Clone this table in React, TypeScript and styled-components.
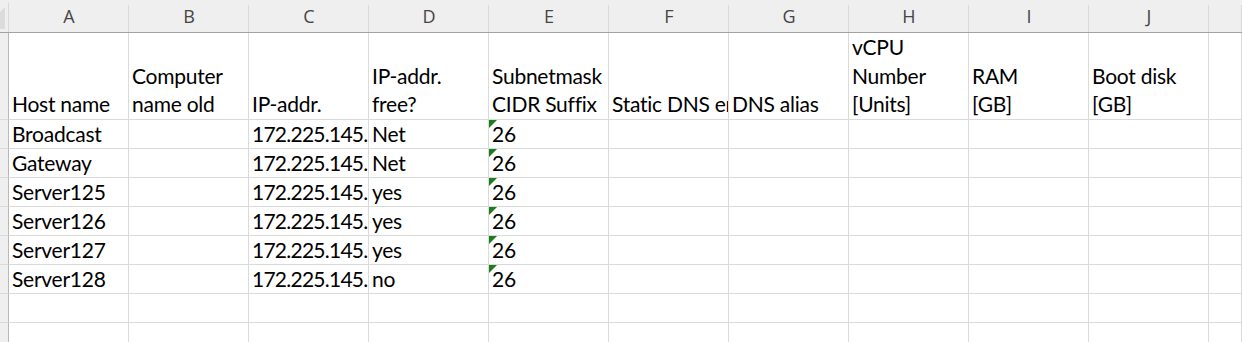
import React from "react";
import styled, { createGlobalStyle } from "styled-components";

const GlobalStyle = createGlobalStyle`
  html, body {
    margin: 0;
    padding: 0;
    overflow: hidden;
    background: #ffffff;
  }
  * { box-sizing: border-box; }
`;

const GRID = "#dadada";
const HEADER_BG = "#efefef";

const Sheet = styled.div`
  display: grid;
  grid-template-columns: 9px repeat(10, 120px) 1fr;
  grid-template-rows: 33px 87px repeat(8, 29px);
  width: 100vw;
  height: 100vh;
  overflow: hidden;
  background: #ffffff;
`;

const Corner = styled.div`
  background: ${HEADER_BG};
  border-bottom: 1px solid #a2a2a2;
  background-image: linear-gradient(to bottom, transparent 3px, #d9d9d9 3px);
  background-size: 1px 100%;
  background-position: right top;
  background-repeat: no-repeat;
  display: flex;
  align-items: flex-start;
`;

const ColHead = styled.div`
  background-color: ${HEADER_BG};
  background-image: linear-gradient(to bottom, transparent 5px, #d9d9d9 5px);
  background-size: 1px 100%;
  background-position: right top;
  background-repeat: no-repeat;
  border-bottom: 1px solid #a2a2a2;
  display: flex;
  align-items: center;
  justify-content: center;
  padding-bottom: 1px;
  font-family: "Open Sans", "Noto Sans", sans-serif;
  font-size: 18px;
  color: #454545;
`;

const RowHead = styled.div`
  background: ${HEADER_BG};
  border-right: 1px solid #b8b8b8;
  border-bottom: 1px solid ${GRID};
`;

const Cell = styled.div<{ $head?: boolean; $tight?: boolean }>`
  position: relative;
  border-right: 1px solid ${GRID};
  border-bottom: 1px solid ${GRID};
  padding: 0 0 0 3px;
  display: flex;
  flex-direction: column;
  justify-content: flex-end;
  overflow: hidden;
  white-space: nowrap;
  font-family: "Lato", "Open Sans", sans-serif;
  font-size: 21px;
  letter-spacing: ${(p) => (p.$tight ? "-0.75px" : "-0.25px")};
  line-height: ${(p) => (p.$head ? "28.6px" : "28px")};
  color: #000000;
`;

const Line = styled.span`
  display: block;
`;

const ErrorMark = styled.span`
  position: absolute;
  left: 0;
  top: 0;
  width: 8px;
  height: 8px;
  background: #1b7d1b;
  clip-path: polygon(0 0, 100% 0, 0 100%);
`;

const columns = ["A", "B", "C", "D", "E", "F", "G", "H", "I", "J", ""];

const headerRow: string[][] = [
  ["Host name"],
  ["Computer", "name old"],
  ["IP-addr."],
  ["IP-addr.", "free?"],
  ["Subnetmask", "CIDR Suffix"],
  ["Static DNS entry"],
  ["DNS alias"],
  ["vCPU", "Number", "[Units]"],
  ["RAM", "[GB]"],
  ["Boot disk", "[GB]"],
  [],
];

const dataRows: string[][] = [
  ["Broadcast", "", "172.225.145.", "Net", "26"],
  ["Gateway", "", "172.225.145.", "Net", "26"],
  ["Server125", "", "172.225.145.", "yes", "26"],
  ["Server126", "", "172.225.145.", "yes", "26"],
  ["Server127", "", "172.225.145.", "yes", "26"],
  ["Server128", "", "172.225.145.", "no", "26"],
  [],
  [],
];

function SelectAll() {
  return (
    <svg width="8" height="32" viewBox="0 0 8 32" aria-hidden="true">
      <polygon points="0,12 5,7 5,29 0,29" fill="#dcdcdc" />
    </svg>
  );
}

export default function App() {
  return (
    <>
      <GlobalStyle />
      <Sheet>
        <Corner>
          <SelectAll />
        </Corner>
        {columns.map((c, i) => (
          <ColHead key={`h${i}`}>{c}</ColHead>
        ))}

        <RowHead />
        {headerRow.map((lines, i) => (
          <Cell key={`r1-${i}`} $head>
            {lines.map((l, j) => (
              <Line key={j}>{l}</Line>
            ))}
          </Cell>
        ))}

        {dataRows.map((row, r) => (
          <React.Fragment key={`r${r}`}>
            <RowHead />
            {columns.map((_, c) => {
              const v = row[c] ?? "";
              return (
                <Cell key={`c${r}-${c}`} $tight={c === 2}>
                  {c === 4 && v !== "" && <ErrorMark />}
                  {v !== "" && <Line>{v}</Line>}
                </Cell>
              );
            })}
          </React.Fragment>
        ))}
      </Sheet>
    </>
  );
}
